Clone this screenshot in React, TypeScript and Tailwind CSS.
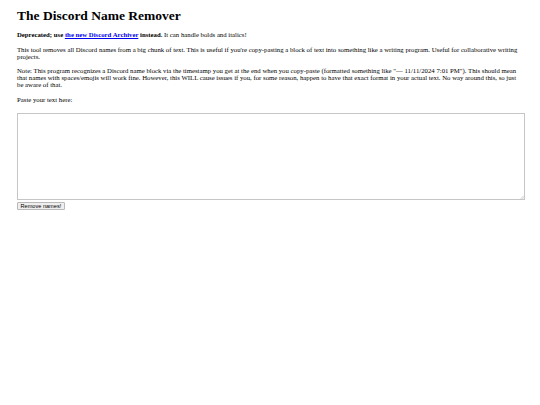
export default function App() {
  return (
    <div className="min-h-[405px] bg-white px-[17px] pt-[8.4px] font-['Liberation_Serif','Times_New_Roman',serif] text-black">
      <h1 className="mb-[7.6px] text-[13.5px] font-bold leading-[15.5px]">The Discord Name Remover</h1>

      <p className="mb-[7.5px] text-[6.75px] leading-[7px]">
        <b>
          Deprecated; use{" "}
          <a href="#" className="text-[#0000ee] underline">
            the new Discord Archiver
          </a>{" "}
          instead.
        </b>{" "}
        It can handle bolds and italics!
      </p>

      <p className="mb-[7.5px] text-[6.75px] leading-[7px]">
        This tool removes all Discord names from a big chunk of text. This is useful if you're copy-pasting a block of
        text into something like a writing program. Useful for collaborative writing projects.
      </p>

      <p className="mb-[7.5px] text-[6.75px] leading-[7px]">
        Note: This program recognizes a Discord name block via the timestamp you get at the end when you copy-paste
        (formatted something like "— 11/11/2024 7:01 PM"). This should mean that names with spaces/emojis will work
        fine. However, this WILL cause issues if you, for some reason, happen to have that exact format in your actual
        text. No way around this, so just be aware of that.
      </p>

      <p className="text-[6.75px] leading-[7px]">Paste your text here:</p>

      <div className="mt-[10px] flex flex-col items-start gap-[2.5px]">
        <div className="relative">
          <textarea className="block h-[87px] w-[508px] resize-none border border-[#c6c6c6] bg-white p-[1px] text-[6px] outline-none" />
          {/* light resize grip */}
          <svg className="pointer-events-none absolute bottom-[1px] right-[1px] h-[4px] w-[4px]" viewBox="0 0 4 4">
            <path d="M4 0.5 L0.5 4 M4 2.2 L2.2 4" stroke="#b5b5b5" strokeWidth="0.6" />
          </svg>
        </div>
        <button className="h-[8px] rounded-[1px] border border-[#b8b8b8] bg-[#efefef] px-[2.5px] font-['Liberation_Sans',Arial,sans-serif] text-[5.6px] leading-[6px] text-black">
          Remove names!
        </button>
      </div>
    </div>
  );
}
